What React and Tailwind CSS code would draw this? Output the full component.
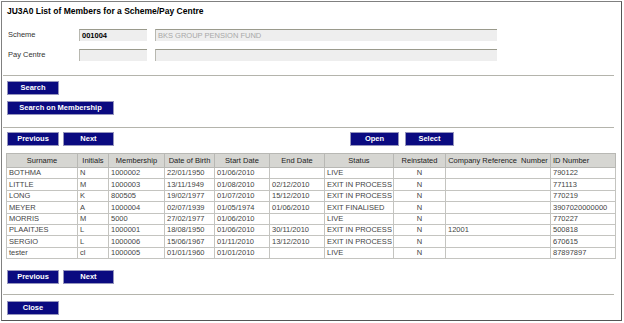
// App.jsx — JU3A0 member list screen
const rows = [
  ["BOTHMA", "N", "1000002", "22/01/1950", "01/06/2010", "", "LIVE", "N", "", "790122"],
  ["LITTLE", "M", "1000003", "13/11/1949", "01/08/2010", "02/12/2010", "EXIT IN PROCESS", "N", "", "771113"],
  ["LONG", "K", "800505", "19/02/1977", "01/07/2010", "15/12/2010", "EXIT IN PROCESS", "N", "", "770219"],
  ["MEYER", "A", "1000004", "02/07/1939", "01/05/1974", "01/06/2010", "EXIT FINALISED", "N", "", "3907020000000"],
  ["MORRIS", "M", "5000", "27/02/1977", "01/06/2010", "", "LIVE", "N", "", "770227"],
  ["PLAAITJES", "L", "1000001", "18/08/1950", "01/06/2010", "30/11/2010", "EXIT IN PROCESS", "N", "12001", "500818"],
  ["SERGIO", "L", "1000006", "15/06/1967", "01/11/2010", "13/12/2010", "EXIT IN PROCESS", "N", "", "670615"],
  ["tester", "cl", "1000005", "01/01/1960", "01/01/2010", "", "LIVE", "N", "", "87897897"],
];

const headers = [
  "Surname",
  "Initials",
  "Membership",
  "Date of Birth",
  "Start Date",
  "End Date",
  "Status",
  "Reinstated",
  "Company Reference  Number",
  "ID Number",
];

const widths = [71, 31, 56, 50, 55, 55, 69, 52, 105, 65];

function Btn({ children, w }) {
  return (
    <div
      className={`${w} h-[14px] flex items-center justify-center bg-[#0a0a80] border border-[#9595bd] text-white font-bold text-[7.5px] leading-none`}
    >
      {children}
    </div>
  );
}

function Field({ w, children, className = "" }) {
  return (
    <div
      className={`${w} h-[12px] bg-[#eeeeee] border-t border-l border-t-[#9a9a8c] border-l-[#b8b8b0] flex items-center pl-[2px] text-[7.5px] leading-none ${className}`}
    >
      {children}
    </div>
  );
}

export default function App() {
  return (
    <div
      className="w-[624px] h-[323px] bg-white overflow-hidden"
      style={{ fontFamily: '"Liberation Sans", Arial, sans-serif' }}
    >
      <div className="ml-[1px] mt-[1px] w-[621px] h-[320px] border border-[#808080] border-r-[#555555] border-b-[#555555] flex flex-col">
        <div className="mt-[3px] h-[12px] leading-[12px] pl-[5px] text-[8.5px] font-bold text-black">
          JU3A0 List of Members for a Scheme/Pay Centre
        </div>

        <div className="mt-[12px] h-[12px] flex items-center pl-[6px]">
          <div className="w-[71px] text-[7.5px] text-[#333]">Scheme</div>
          <Field w="w-[68px]" className="font-bold text-black">001004</Field>
          <Field w="w-[342px] ml-[8px]" className="text-[#a8a8a8]">BKS GROUP PENSION FUND</Field>
        </div>

        <div className="mt-[8px] h-[12px] flex items-center pl-[6px]">
          <div className="w-[71px] text-[7.5px] text-[#333]">Pay Centre</div>
          <Field w="w-[68px]" />
          <Field w="w-[342px] ml-[8px]" />
        </div>

        <div className="mt-[14px] ml-[1px] w-[611px] h-px bg-[#b4b4ac]" />

        <div className="mt-[5px] ml-[5px]">
          <Btn w="w-[52px]">Search</Btn>
        </div>
        <div className="mt-[6px] ml-[5px]">
          <Btn w="w-[107px]">Search on Membership</Btn>
        </div>

        <div className="mt-[12px] ml-[1px] w-[611px] h-px bg-[#b4b4ac]" />

        <div className="mt-[4px] ml-[5px] flex">
          <Btn w="w-[52px]">Previous</Btn>
          <div className="ml-[4px]">
            <Btn w="w-[51px]">Next</Btn>
          </div>
          <div className="ml-[236px]">
            <Btn w="w-[49px]">Open</Btn>
          </div>
          <div className="ml-[6px]">
            <Btn w="w-[49px]">Select</Btn>
          </div>
        </div>

        <table className="mt-[7px] ml-[4px] w-[609px] table-fixed border-collapse border border-[#a8a8a8] text-[7.5px] leading-none">
          <colgroup>
            {widths.map((w, i) => (
              <col key={i} style={{ width: w }} />
            ))}
          </colgroup>
          <thead>
            <tr className="h-[14px] bg-[#d6d6d2]">
              {headers.map((h, i) => (
                <th
                  key={i}
                  className={`border border-[#b8b8b4] font-normal text-[#222] whitespace-pre p-0 ${
                    i === 9 ? "text-left pl-[2px]" : "text-center"
                  }`}
                >
                  {h}
                </th>
              ))}
            </tr>
          </thead>
          <tbody>
            {rows.map((r, ri) => (
              <tr key={ri} className="h-[11.4px]">
                {r.map((c, ci) => (
                  <td
                    key={ci}
                    className={`border border-[#c4c4c0] text-[#444] p-0 whitespace-nowrap ${
                      ci === 7 ? "text-center" : "text-left pl-[2px]"
                    }`}
                  >
                    {c}
                  </td>
                ))}
              </tr>
            ))}
          </tbody>
        </table>

        <div className="mt-[11px] ml-[5px] flex">
          <Btn w="w-[52px]">Previous</Btn>
          <div className="ml-[4px]">
            <Btn w="w-[51px]">Next</Btn>
          </div>
        </div>

        <div className="mt-[10px] ml-[1px] w-[611px] h-px bg-[#b4b4ac]" />

        <div className="mt-[6px] ml-[5px]">
          <Btn w="w-[52px]">Close</Btn>
        </div>
      </div>
    </div>
  );
}
